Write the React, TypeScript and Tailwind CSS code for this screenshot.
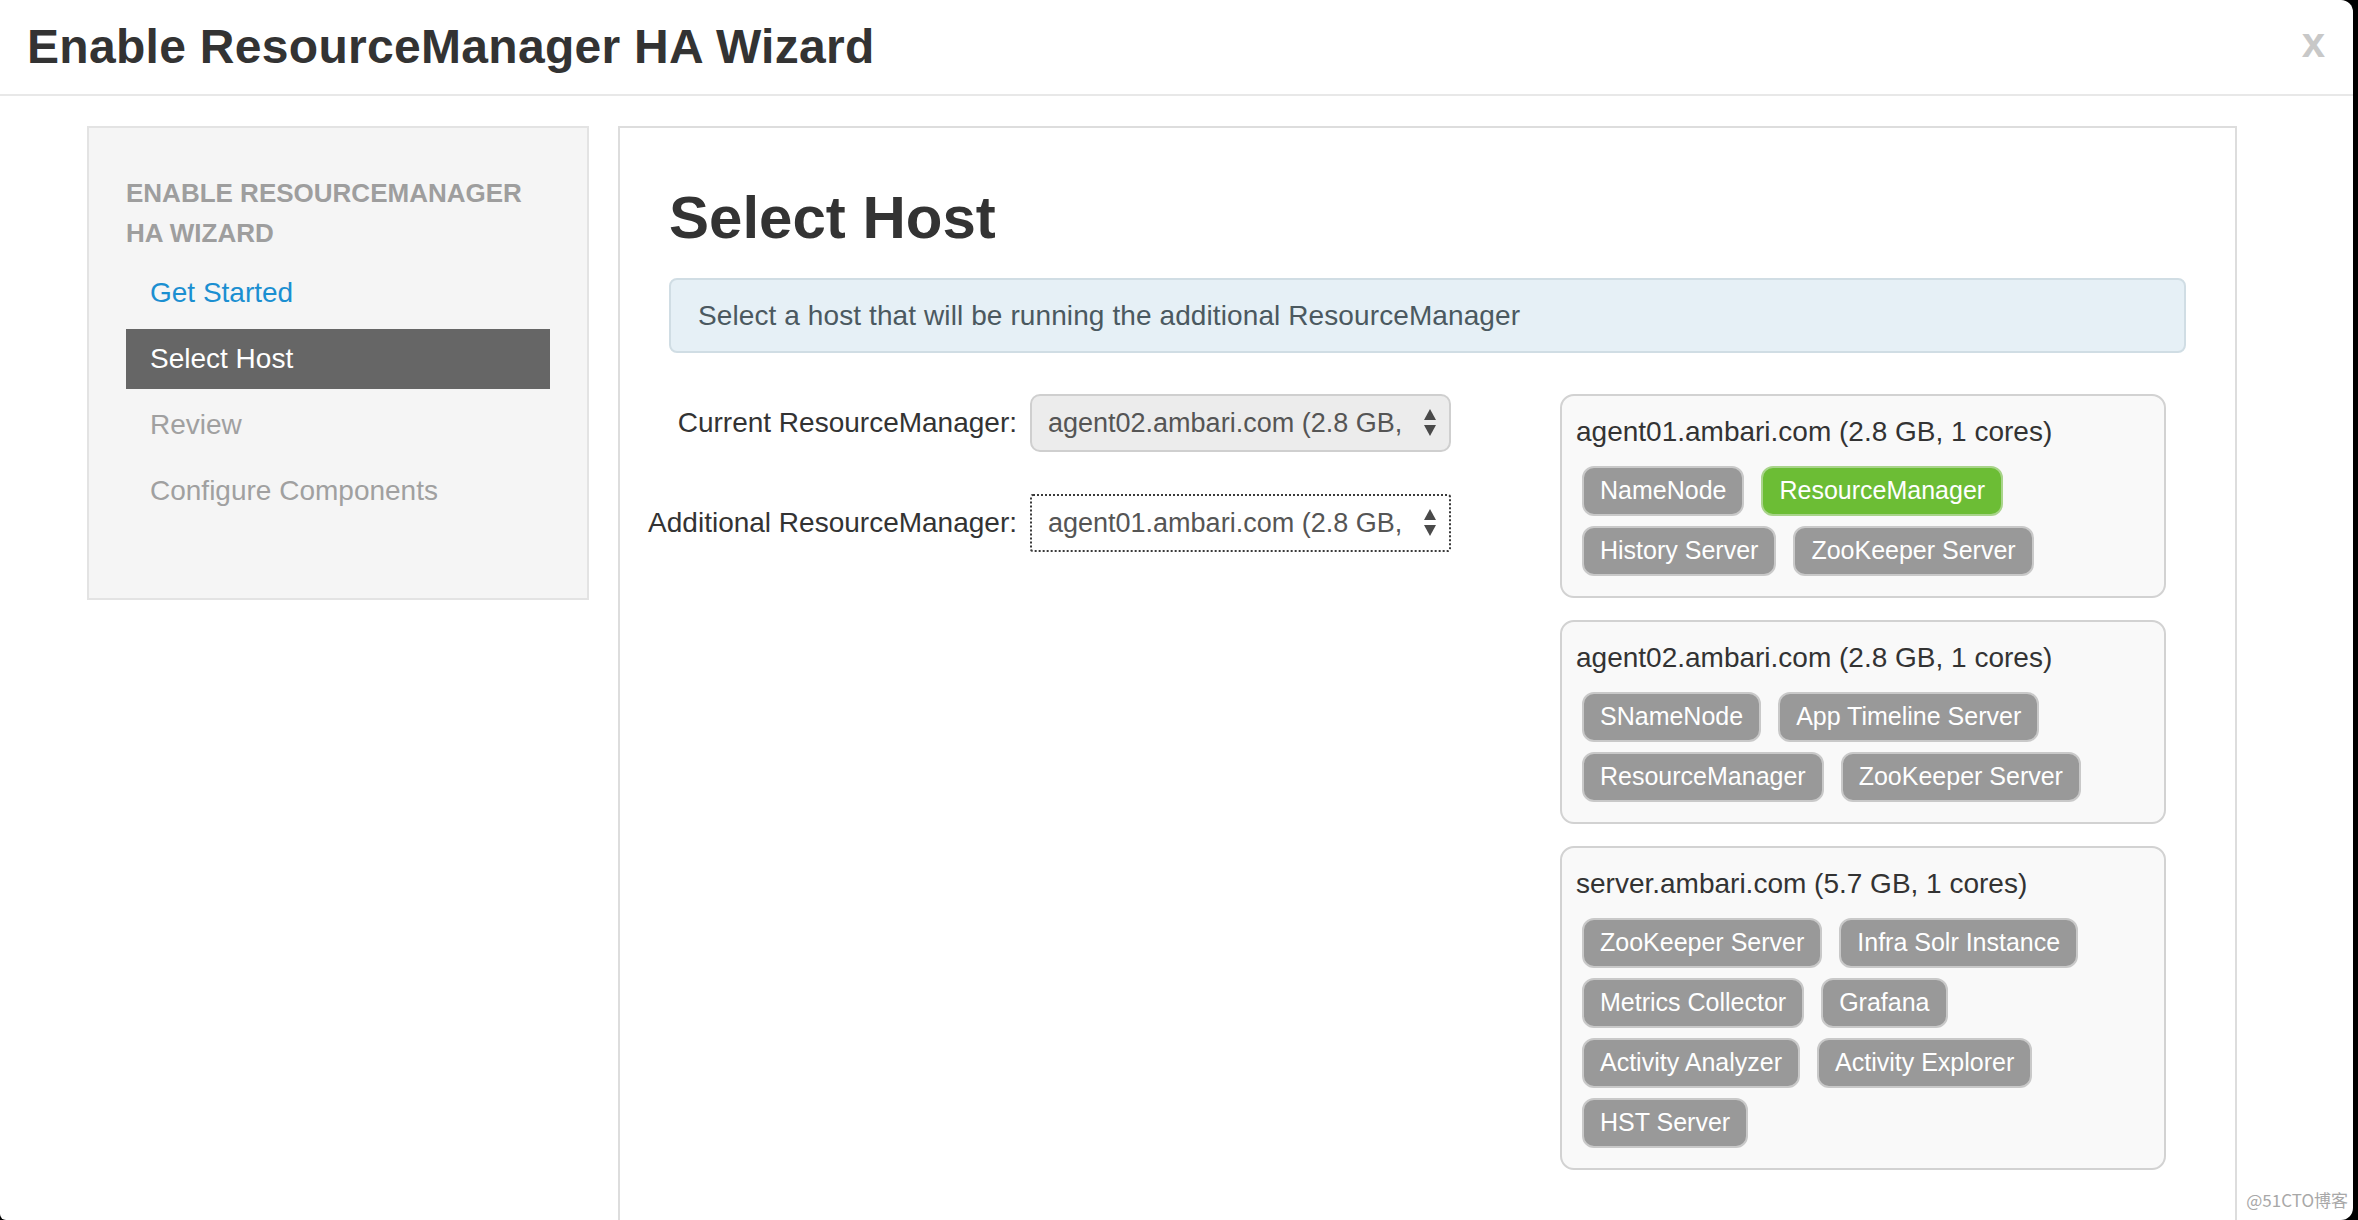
import React from "react";

const FONT = { fontFamily: '"Liberation Sans", Arial, "Noto Sans CJK SC", sans-serif' };

type Badge = { name: string; active?: boolean };
type Host = { title: string; badges: Badge[] };

const hosts: Host[] = [
  {
    title: "agent01.ambari.com (2.8 GB, 1 cores)",
    badges: [
      { name: "NameNode" },
      { name: "ResourceManager", active: true },
      { name: "History Server" },
      { name: "ZooKeeper Server" },
    ],
  },
  {
    title: "agent02.ambari.com (2.8 GB, 1 cores)",
    badges: [
      { name: "SNameNode" },
      { name: "App Timeline Server" },
      { name: "ResourceManager" },
      { name: "ZooKeeper Server" },
    ],
  },
  {
    title: "server.ambari.com (5.7 GB, 1 cores)",
    badges: [
      { name: "ZooKeeper Server" },
      { name: "Infra Solr Instance" },
      { name: "Metrics Collector" },
      { name: "Grafana" },
      { name: "Activity Analyzer" },
      { name: "Activity Explorer" },
      { name: "HST Server" },
    ],
  },
];

function Arrows() {
  return (
    <svg width="14" height="30" viewBox="0 0 14 30" className="shrink-0">
      <polygon points="7,1 13,12 1,12" fill="#4a4a4a" />
      <polygon points="1,17 13,17 7,28" fill="#4a4a4a" />
    </svg>
  );
}

function SelectBox({ value, focused }: { value: string; focused?: boolean }) {
  return (
    <div
      className={
        focused
          ? "w-[421px] h-[58px] flex items-center pl-[16px] pr-[12px] bg-white border-2 border-dotted border-[#3a3a3a] rounded-[3px]"
          : "w-[421px] h-[58px] flex items-center pl-[16px] pr-[12px] bg-[#ececec] border-2 border-[#cfcfcf] rounded-[10px]"
      }
    >
      <div className="flex-1 whitespace-nowrap text-[27px] text-[#555555]">{value}</div>
      <Arrows />
    </div>
  );
}

export default function App() {
  return (
    <div className="w-[2358px] h-[1220px] bg-black overflow-hidden relative" style={FONT}>
      <div className="w-[2353px] h-[1220px] bg-white rounded-r-[12px] rounded-bl-[6px] overflow-hidden flex flex-col">
        {/* Header */}
        <div className="h-[96px] shrink-0 border-b-2 border-[#e8e8e8] flex items-center justify-between pl-[27px] pr-[28px]">
          <div className="text-[48px] font-bold text-[#333333] leading-none tracking-[0.3px]">
            Enable ResourceManager HA Wizard
          </div>
          <div className="text-[42px] font-bold text-[#c8c8c8] leading-none -mt-[8px]">x</div>
        </div>

        {/* Body */}
        <div className="flex items-start pt-[30px] pl-[87px] gap-[29px] flex-1 min-h-0">
          {/* Sidebar */}
          <div className="w-[502px] shrink-0 bg-[#f5f5f5] border-2 border-[#e3e3e3] pt-[45px] pb-[77px] pl-[37px] pr-[37px]">
            <div className="text-[26px] font-bold text-[#9e9e9e] uppercase leading-[40px] pr-[10px]">
              Enable ResourceManager HA Wizard
            </div>
            <div className="mt-[10px] flex flex-col gap-[6px]">
              <div className="h-[60px] flex items-center pl-[24px] text-[28px] text-[#1b8fd1]">Get Started</div>
              <div className="h-[60px] flex items-center pl-[24px] text-[28px] text-white bg-[#666666]">Select Host</div>
              <div className="h-[60px] flex items-center pl-[24px] text-[28px] text-[#a0a0a0]">Review</div>
              <div className="h-[60px] flex items-center pl-[24px] text-[28px] text-[#a0a0a0]">Configure Components</div>
            </div>
          </div>

          {/* Main panel */}
          <div className="w-[1619px] shrink-0 self-stretch border-2 border-b-0 border-[#dddddd] bg-white pt-[57px] px-[49px]">
            <div className="text-[60px] font-bold text-[#333333] leading-[66px]">Select Host</div>
            <div className="mt-[27px] h-[75px] flex items-center px-[27px] bg-[#e6f0f6] border-2 border-[#d0dde4] rounded-[8px] text-[28px] text-[#4b5960] tracking-[0.1px]">
              Select a host that will be running the additional ResourceManager
            </div>

            <div className="flex items-start mt-[41px]">
              {/* Form */}
              <div className="w-[891px] shrink-0 flex flex-col gap-[42px]">
                <div className="flex items-center -ml-[30px]">
                  <div className="w-[379px] text-right text-[28px] text-[#333333] pr-[1px]">Current ResourceManager:</div>
                  <div className="ml-[12px]">
                    <SelectBox value="agent02.ambari.com (2.8 GB," />
                  </div>
                </div>
                <div className="flex items-center -ml-[30px]">
                  <div className="w-[379px] text-right text-[28px] text-[#333333] pr-[1px]">Additional ResourceManager:</div>
                  <div className="ml-[12px]">
                    <SelectBox value="agent01.ambari.com (2.8 GB," focused />
                  </div>
                </div>
              </div>

              {/* Host cards */}
              <div className="w-[606px] shrink-0 flex flex-col gap-[22px]">
                {hosts.map((h) => (
                  <div
                    key={h.title}
                    className="bg-[#f9f9f9] border-2 border-[#d2d2d2] rounded-[14px] pt-[16px] pb-[20px] pl-[14px] pr-[14px]"
                  >
                    <div className="text-[28px] text-[#333333] leading-[40px]">{h.title}</div>
                    <div className="mt-[14px] pl-[6px] flex flex-wrap gap-x-[17px] gap-y-[10px]">
                      {h.badges.map((b, i) => (
                        <div
                          key={i}
                          className={
                            b.active
                              ? "h-[50px] flex items-center px-[16px] rounded-[12px] border-2 border-[#a9d48b] bg-[#6cbd35] text-white text-[25px]"
                              : "h-[50px] flex items-center px-[16px] rounded-[12px] border-2 border-[#c9c9c9] bg-[#999999] text-white text-[25px]"
                          }
                        >
                          {b.name}
                        </div>
                      ))}
                    </div>
                  </div>
                ))}
              </div>
            </div>
          </div>
        </div>
      </div>

      {/* Watermark */}
      <div
        className="absolute right-[10px] top-[1191px] text-[17px] text-[#a8a8a8] leading-none whitespace-nowrap"
        style={{ fontFamily: '"Noto Sans CJK SC", "Liberation Sans", sans-serif', textShadow: "0 0 2px #fff, 0 0 2px #fff" }}
      >
        @51CTO博客
      </div>
    </div>
  );
}
